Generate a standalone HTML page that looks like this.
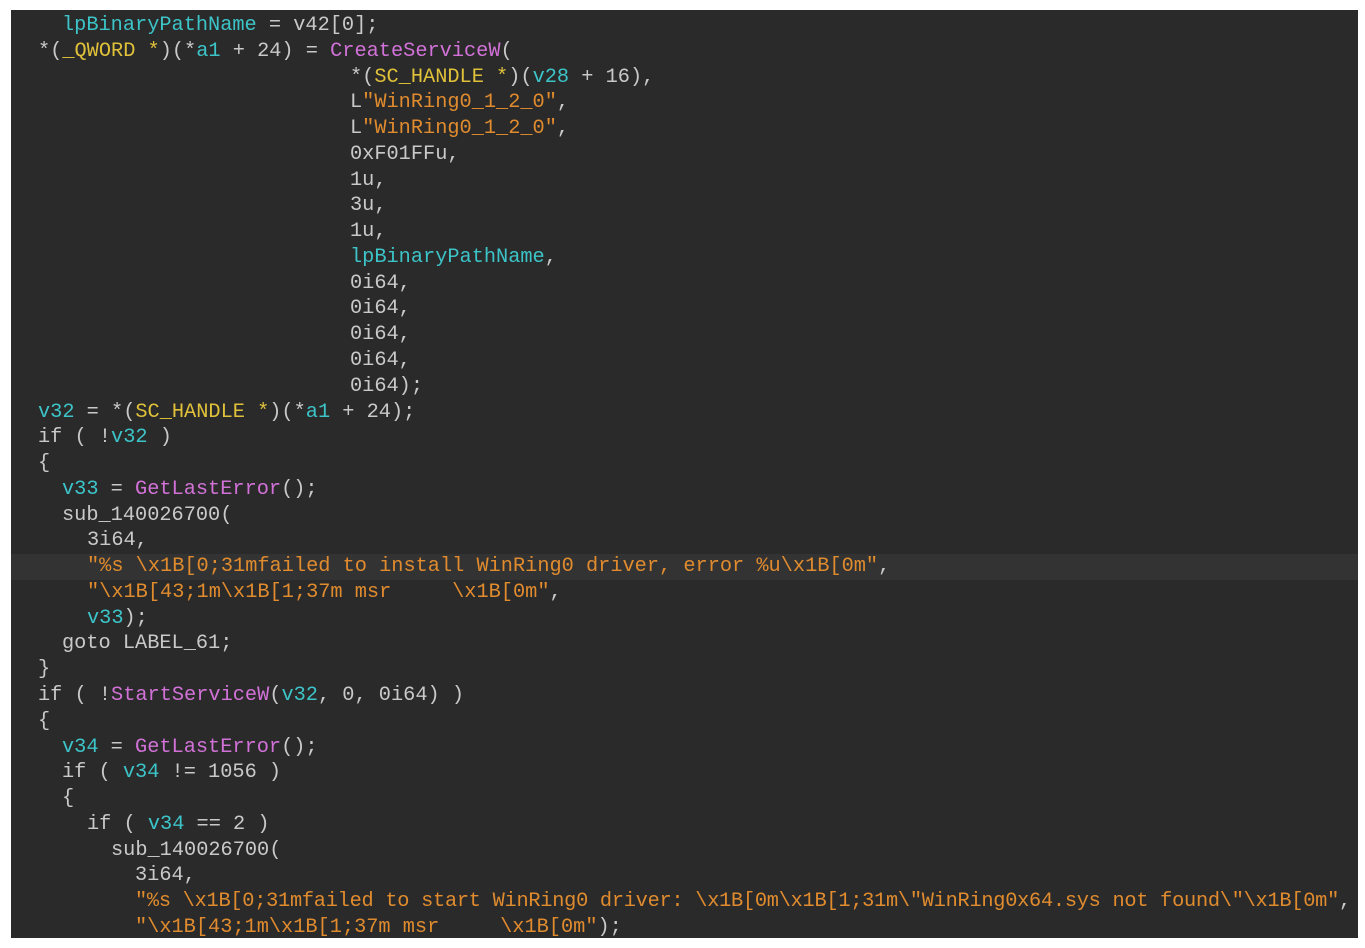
<!DOCTYPE html>
<html><head><meta charset="utf-8"><style>
html,body{margin:0;padding:0;background:#fff;}
body{width:1365px;height:948px;position:relative;overflow:hidden;}
#p{position:absolute;left:11px;top:10px;width:1347px;height:928px;background:#2a2a2a;}
.l{position:absolute;left:0;right:0;height:25.77px;line-height:25.77px;font-family:"Liberation Mono",monospace;font-size:20.3px;color:#c9c9c9;white-space:pre;}
.l span.t{position:absolute;top:0;}
.hl{background:#333333;}
.v{color:#3cc4c8}.f{color:#d272d8}.y{color:#e0c13a}.s{color:#e08b2e}
</style></head><body><div id="p"></div>
<div style="position:absolute;left:11px;top:13px;width:1347px;height:925px;">
<div class="l" style="top:0px"><span class="t" style="left:51px"><span class="v">lpBinaryPathName</span> = v42[0];</span></div>
<div class="l" style="top:25.77px"><span class="t" style="left:27px">*(<span class="y">_QWORD *</span>)(*<span class="v">a1</span> + 24) = <span class="f">CreateServiceW</span>(</span></div>
<div class="l" style="top:51.54px"><span class="t" style="left:339px">*(<span class="y">SC_HANDLE *</span>)(<span class="v">v28</span> + 16),</span></div>
<div class="l" style="top:77.31px"><span class="t" style="left:339px">L<span class="s">"WinRing0_1_2_0"</span>,</span></div>
<div class="l" style="top:103.08px"><span class="t" style="left:339px">L<span class="s">"WinRing0_1_2_0"</span>,</span></div>
<div class="l" style="top:128.85px"><span class="t" style="left:339px">0xF01FFu,</span></div>
<div class="l" style="top:154.62px"><span class="t" style="left:339px">1u,</span></div>
<div class="l" style="top:180.39px"><span class="t" style="left:339px">3u,</span></div>
<div class="l" style="top:206.16px"><span class="t" style="left:339px">1u,</span></div>
<div class="l" style="top:231.93px"><span class="t" style="left:339px"><span class="v">lpBinaryPathName</span>,</span></div>
<div class="l" style="top:257.7px"><span class="t" style="left:339px">0i64,</span></div>
<div class="l" style="top:283.47px"><span class="t" style="left:339px">0i64,</span></div>
<div class="l" style="top:309.24px"><span class="t" style="left:339px">0i64,</span></div>
<div class="l" style="top:335.01px"><span class="t" style="left:339px">0i64,</span></div>
<div class="l" style="top:360.78px"><span class="t" style="left:339px">0i64);</span></div>
<div class="l" style="top:386.55px"><span class="t" style="left:27px"><span class="v">v32</span> = *(<span class="y">SC_HANDLE *</span>)(*<span class="v">a1</span> + 24);</span></div>
<div class="l" style="top:412.32px"><span class="t" style="left:27px">if ( !<span class="v">v32</span> )</span></div>
<div class="l" style="top:438.09px"><span class="t" style="left:27px">{</span></div>
<div class="l" style="top:463.86px"><span class="t" style="left:51px"><span class="v">v33</span> = <span class="f">GetLastError</span>();</span></div>
<div class="l" style="top:489.63px"><span class="t" style="left:51px">sub_140026700(</span></div>
<div class="l" style="top:515.4px"><span class="t" style="left:76px">3i64,</span></div>
<div class="l hl" style="top:541.17px"><span class="t" style="left:76px"><span class="s">"%s \x1B[0;31mfailed to install WinRing0 driver, error %u\x1B[0m"</span>,</span></div>
<div class="l" style="top:566.94px"><span class="t" style="left:76px"><span class="s">"\x1B[43;1m\x1B[1;37m msr     \x1B[0m"</span>,</span></div>
<div class="l" style="top:592.71px"><span class="t" style="left:76px"><span class="v">v33</span>);</span></div>
<div class="l" style="top:618.48px"><span class="t" style="left:51px">goto LABEL_61;</span></div>
<div class="l" style="top:644.25px"><span class="t" style="left:27px">}</span></div>
<div class="l" style="top:670.02px"><span class="t" style="left:27px">if ( !<span class="f">StartServiceW</span>(<span class="v">v32</span>, 0, 0i64) )</span></div>
<div class="l" style="top:695.79px"><span class="t" style="left:27px">{</span></div>
<div class="l" style="top:721.56px"><span class="t" style="left:51px"><span class="v">v34</span> = <span class="f">GetLastError</span>();</span></div>
<div class="l" style="top:747.33px"><span class="t" style="left:51px">if ( <span class="v">v34</span> != 1056 )</span></div>
<div class="l" style="top:773.1px"><span class="t" style="left:51px">{</span></div>
<div class="l" style="top:798.87px"><span class="t" style="left:76px">if ( <span class="v">v34</span> == 2 )</span></div>
<div class="l" style="top:824.64px"><span class="t" style="left:100px">sub_140026700(</span></div>
<div class="l" style="top:850.41px"><span class="t" style="left:124px">3i64,</span></div>
<div class="l" style="top:876.18px"><span class="t" style="left:124px;letter-spacing:-0.25px"><span class="s">"%s \x1B[0;31mfailed to start WinRing0 driver: \x1B[0m\x1B[1;31m\"WinRing0x64.sys not found\"\x1B[0m"</span>,</span></div>
<div class="l" style="top:901.95px"><span class="t" style="left:124px"><span class="s">"\x1B[43;1m\x1B[1;37m msr     \x1B[0m"</span>);</span></div>
</div>
</body></html>
